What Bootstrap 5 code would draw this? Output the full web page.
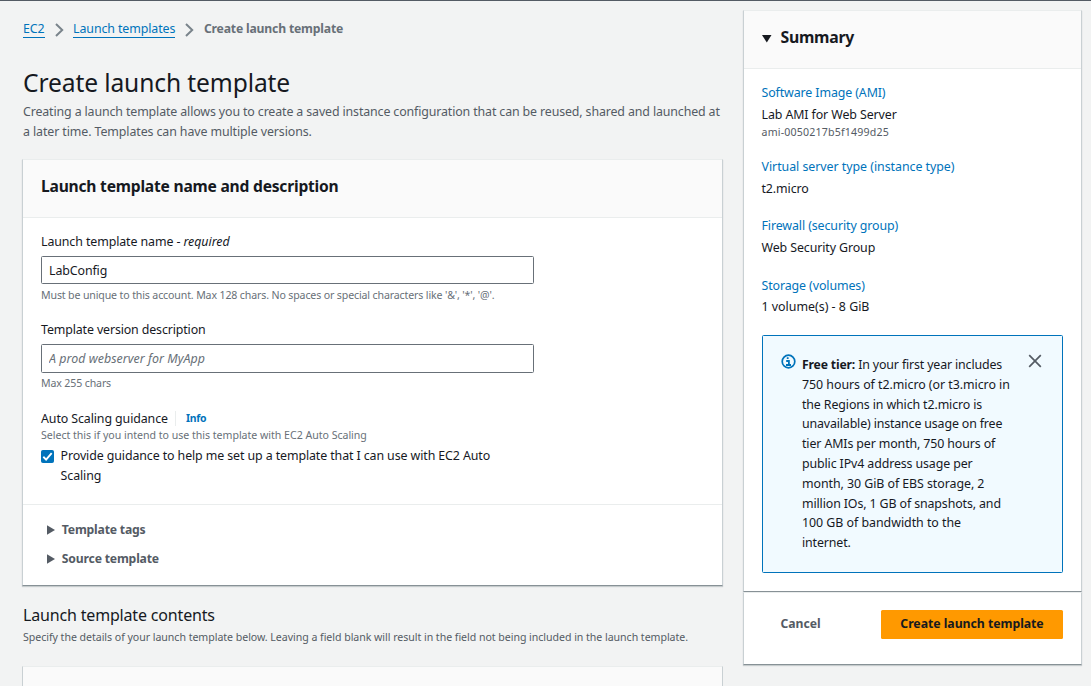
<!DOCTYPE html>
<html lang="en">
<head>
<meta charset="utf-8">
<meta name="viewport" content="width=device-width, initial-scale=1">
<title>Create launch template</title>
<link href="https://cdn.jsdelivr.net/npm/bootstrap@5.3.0/dist/css/bootstrap.min.css" rel="stylesheet">
<script src="https://cdn.jsdelivr.net/npm/bootstrap@5.3.0/dist/js/bootstrap.bundle.min.js"></script>
<style>
  :root { --ink: #16191f; --slate: #545b64; --mute: #687078; --blue: #0073bb; --line: #eaeded; }
  body { font: 12.4px/20px "Noto Sans", sans-serif; color: var(--ink); background: #f2f3f3;
         letter-spacing: -.1px; border-top: 1px solid var(--slate); height: 686px; overflow: hidden; }
  a { color: var(--blue); text-decoration: none; }
  .page-main { width: 701px; margin-left: 22px; }
  .page-side { width: 339px; margin: 9px 0 0 20px; }
  b, .strong { font-weight: 700; font-size: 12.2px; letter-spacing: -.18px; }
  .crumbs { height: 20px; margin: 18px 0 0 1px; }
  .crumbs a { border-bottom: 1px solid var(--blue); line-height: 16px; }
  .crumbs svg { margin: 1px 9.6px 0 10px; }
  h1 { font-size: 24.6px; line-height: 36px; letter-spacing: -.12px; font-weight: 400; margin: 26px 0 0 1px; }
  .intro { line-height: 19.8px; color: var(--slate); letter-spacing: -.13px; margin: 1px 0 0 1px; white-space: nowrap; }
  .panel { background: #fff; border: 1px solid #c9d0d3; border-top-color: var(--line); border-bottom-color: #879196; border-radius: 0;
           box-shadow: 0 1px 1px rgba(0,28,36,.18); }
  .panel-head { background: #fafafa; border-bottom: 1px solid var(--line); height: 58px; padding: 0 18px; }
  .panel-cut { height: 19.6px; background: #fafafa; border-bottom: 0; box-shadow: none; }
  h2 { font-size: 15.6px; line-height: 24px; font-weight: 700; letter-spacing: -.21px; margin: 0; }
  .hint { font-size: 10.6px; line-height: 16px; color: var(--mute); letter-spacing: -.14px; }
  .form-control { width: 493px; height: 28px; border: 1px solid var(--mute); border-radius: 1.5px; padding: 0 7px;
                  font-size: 12.4px; line-height: 26px; letter-spacing: -.1px; color: var(--ink); }
  .form-control:focus { color: var(--ink); }
  .form-control::placeholder { color: var(--mute); font-style: italic; letter-spacing: .04px; }
  .info-link { font-size: 10.4px; letter-spacing: -.2px; font-weight: 700; border-left: 1px solid var(--line); line-height: 15px; padding-left: 10px; margin-left: 7px; }
  .form-check-input { width: 13px; height: 13px; margin: 4px 6.6px 0 0; float: none; flex: none; }
  .form-check-input[type=checkbox] { border-radius: 1.5px; }
  .form-check-input:checked { background-color: var(--blue); border-color: var(--blue); }
  .form-check-input:checked[type=checkbox] { background-size: 13px;
    background-image: url("data:image/svg+xml,%3csvg xmlns='http://www.w3.org/2000/svg' viewBox='0 0 14 14'%3e%3cpath fill='none' stroke='%23fff' stroke-width='2' d='M2.5 7.3l3 3 6-7'/%3e%3c/svg%3e"); }
  .expanders { border-top: 1px solid var(--line); height: 81px; padding: 15px 0 0 23.6px; color: var(--slate); }
  .expanders svg { margin-right: 7.2px; }
  .h-contents { font-size: 16px; line-height: 24px; letter-spacing: -.17px; margin: 17px 0 0 1px; }
  .facts { padding: 14px 17.5px 0; }
  .free-tier { background: #f1faff; border: 1px solid var(--blue); border-radius: 1.5px; width: 301px; height: 238px; margin: 18px 0 0 18px; padding: 18px 20px 0 17.7px; }
  .free-tier p { line-height: 19.8px; letter-spacing: -.12px; width: 212px; margin: 1px 0 0 6.3px; }
  .free-tier b { letter-spacing: -.16px; }
  .actions { height: 73px; padding: 17px 18px 0 36.5px; }
  .btn-create { background: #ff9900; color: var(--ink); border: 0; border-radius: 1.5px; width: 182px; height: 29px; padding: 0 0 2px;
                font-size: 12.3px; font-weight: 700; letter-spacing: -.05px; line-height: 26px; }
  .btn-create:hover { background: #ec7211; }
</style>
</head>
<body>
<div class="d-flex align-items-start">
  <main class="page-main">
    <nav class="crumbs d-flex align-items-center" aria-label="breadcrumb">
      <a href="#">EC2</a>
      <svg width="9" height="14" viewBox="0 0 9 14" fill="none" stroke="#7a848b" stroke-width="2"><path d="M1 1l6.2 6L1 13"/></svg>
      <a href="#">Launch templates</a>
      <svg width="9" height="14" viewBox="0 0 9 14" fill="none" stroke="#7a848b" stroke-width="2"><path d="M1 1l6.2 6L1 13"/></svg>
      <span class="strong" style="color:var(--mute)">Create launch template</span>
    </nav>
    <h1>Create launch template</h1>
    <p class="intro">Creating a launch template allows you to create a saved instance configuration that can be reused, shared and launched at<br><span style="letter-spacing:-.1px">a later time. Templates can have multiple versions.</span></p>

    <section class="panel" style="margin-top:17.4px">
      <div class="panel-head d-flex align-items-center"><h2 style="margin-top:-4px">Launch template name and description</h2></div>
      <div style="padding:14px 18px 0;height:286px">
        <div>Launch template name - <i style="letter-spacing:-.03px">required</i></div>
        <input class="form-control" style="margin-top:4px;padding-top:1px" value="LabConfig" aria-label="Launch template name">
        <div class="hint" style="margin-top:3px">Must be unique to this account. Max 128 chars. No spaces or special characters like '&amp;', '*', '@'.</div>
        <div style="margin-top:17px;letter-spacing:-.13px">Template version description</div>
        <input class="form-control" style="margin-top:4px;height:29px" placeholder="A prod webserver for MyApp" aria-label="Template version description">
        <div class="hint" style="margin-top:2px">Max 255 chars</div>
        <div class="d-flex align-items-center" style="margin-top:18px">Auto Scaling guidance<a href="#" class="info-link">Info</a></div>
        <div class="hint" style="margin-top:-2px;letter-spacing:-.02px">Select this if you intend to use this template with EC2 Auto Scaling</div>
        <div class="d-flex" style="margin-top:3px;width:475px">
          <input class="form-check-input" type="checkbox" id="guide" checked>
          <label for="guide" style="line-height:19.8px">Provide guidance to help me set up a template that I can use with EC2 Auto<br>Scaling</label>
        </div>
      </div>
      <div class="expanders strong">
        <div class="d-flex align-items-center"><svg width="8" height="10" viewBox="0 0 8 10" fill="#545b64"><path d="M0 .3l8 4.7L0 9.7z"/></svg>Template tags</div>
        <div class="d-flex align-items-center" style="margin-top:9px"><svg width="8" height="10" viewBox="0 0 8 10" fill="#545b64"><path d="M0 .3l8 4.7L0 9.7z"/></svg>Source template</div>
      </div>
    </section>

    <div class="h-contents">Launch template contents</div>
    <div class="hint text-nowrap" style="margin:2px 0 0 1px;letter-spacing:-.04px;color:var(--slate)">Specify the details of your launch template below. Leaving a field blank will result in the field not being included in the launch template.</div>
    <section class="panel panel-cut" style="margin-top:21px"></section>
  </main>

  <aside class="page-side">
    <section class="panel" style="height:582px">
      <div class="panel-head d-flex align-items-center">
        <svg width="10" height="8" viewBox="0 0 10 8" fill="#16191f" style="margin:-1px 9px 0 -.5px"><path d="M0 0h9.5L4.8 7.5z"/></svg>
        <h2 style="margin-top:-6px;font-size:15.8px;letter-spacing:-.25px">Summary</h2>
      </div>
      <div class="facts">
        <div><a href="#" style="letter-spacing:-.11px">Software Image (AMI)</a></div>
        <div style="margin-top:2px">Lab AMI for Web Server</div>
        <div class="hint" style="margin-top:-1px;letter-spacing:.19px;color:var(--slate)">ami-0050217b5f1499d25</div>
        <div style="margin-top:17px"><a href="#" style="letter-spacing:-.04px">Virtual server type (instance type)</a></div>
        <div style="margin-top:2px">t2.micro</div>
        <div style="margin-top:17px"><a href="#">Firewall (security group)</a></div>
        <div style="margin-top:2px">Web Security Group</div>
        <div style="margin-top:18px"><a href="#">Storage (volumes)</a></div>
        <div style="margin-top:1px;letter-spacing:0">1 volume(s) - 8 GiB</div>
      </div>
      <div class="free-tier d-flex align-items-start">
        <svg class="flex-shrink-0" width="15" height="15" viewBox="0 0 15 15" fill="none" stroke="#0073bb"><circle cx="7.5" cy="7.5" r="6.3" stroke-width="1.7"/><path stroke-width="1.8" d="M6.7 3.3v1.8M5.2 7h2.7v4M5 11h5"/></svg>
        <p><b>Free tier:</b> <span style="letter-spacing:-.15px">In your first year includes</span><br><span style="letter-spacing:-.04px">750 hours of t2.micro (or t3.micro in</span><br>the Regions in which t2.micro is<br><span style="letter-spacing:-.15px">unavailable) instance usage on free</span><br>tier AMIs per month, 750 hours of<br>public IPv4 address usage per<br><span style="letter-spacing:-.06px">month, 30 GiB of EBS storage, 2</span><br>million IOs, 1 GB of snapshots, and<br><span style="letter-spacing:-.03px">100 GB of bandwidth to the</span><br>internet.</p>
        <svg class="flex-shrink-0 ms-auto" width="14" height="14" viewBox="0 0 14 14" fill="none" stroke="#545b64" stroke-width="1.7"><path d="M1.2 1.2l11.6 11.6M12.8 1.2L1.2 12.8"/></svg>
      </div>
    </section>
    <section class="panel actions d-flex justify-content-between">
      <a href="#" class="strong" style="color:var(--slate);line-height:27px;letter-spacing:0">Cancel</a>
      <button class="btn btn-create" type="button">Create launch template</button>
    </section>
  </aside>
</div>
</body>
</html>
